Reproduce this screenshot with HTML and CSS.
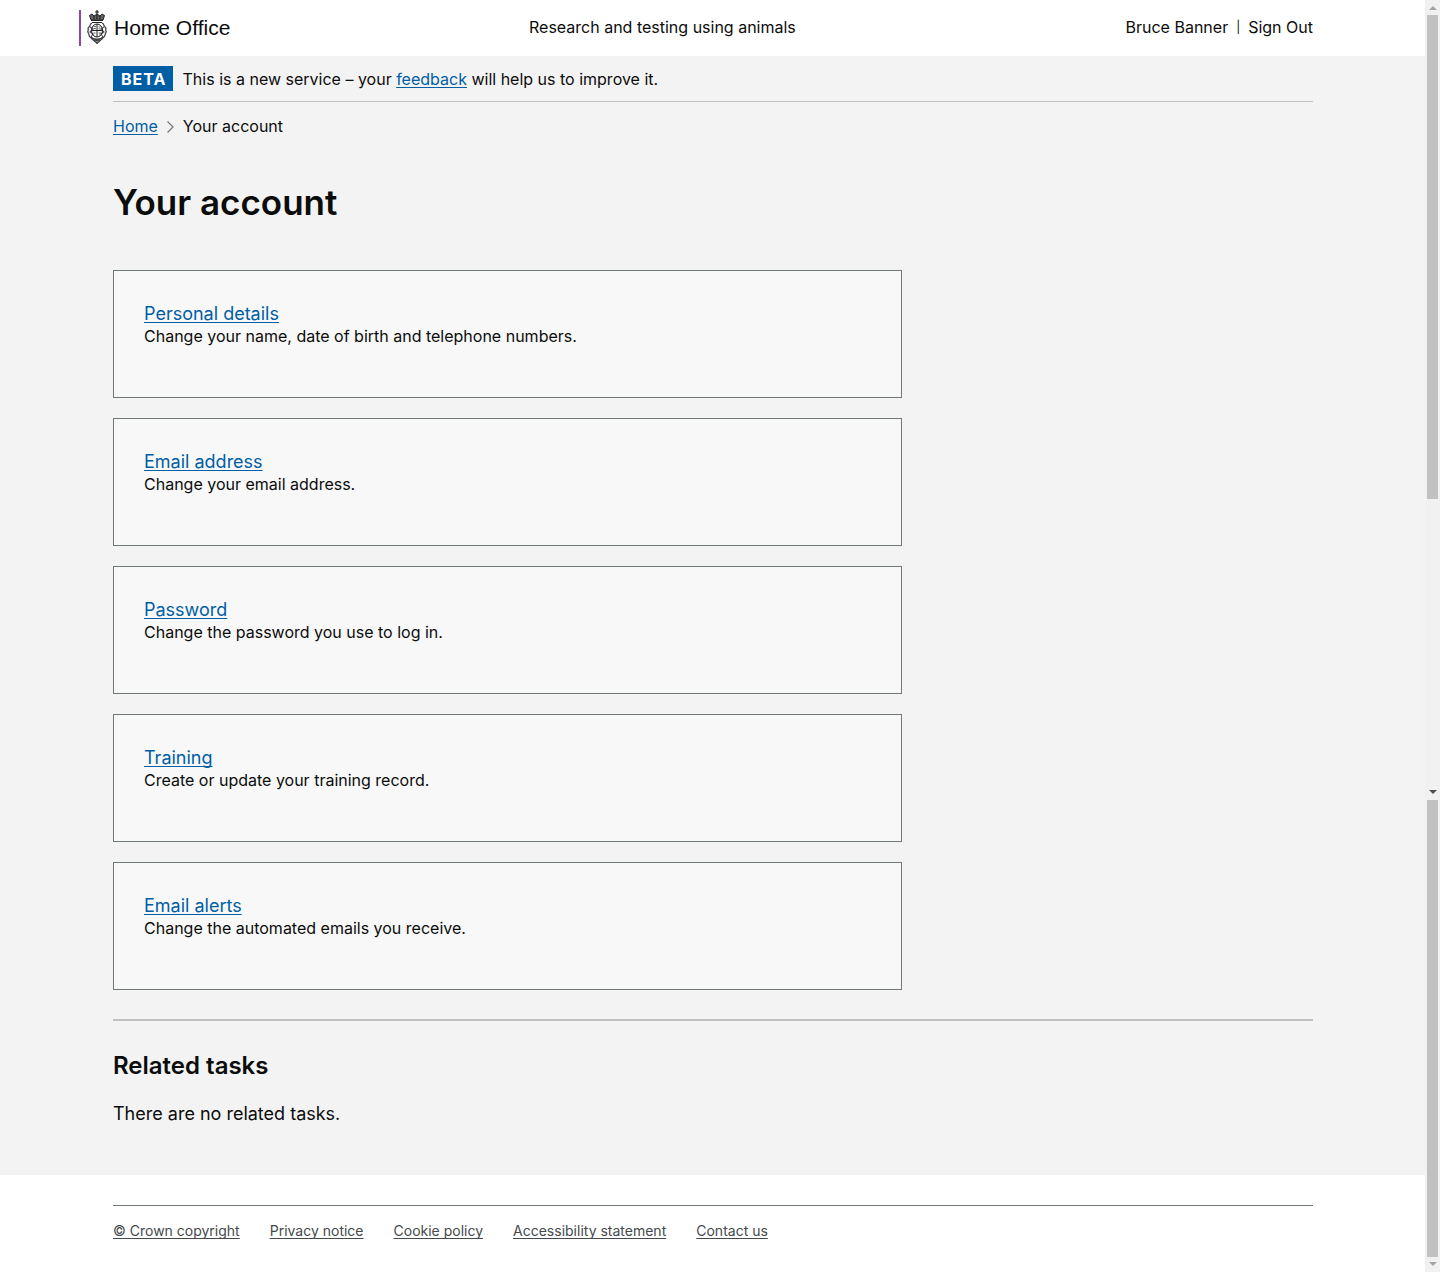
FILE: index.html
```html
<!DOCTYPE html>
<html lang="en">
<head>
<meta charset="utf-8">
<title>Your account - Research and testing using animals</title>
<link rel="stylesheet" href="styles.css">
</head>
<body>
<div class="page">
  <header class="header">
    <div class="header-inner">
      <a class="logo" href="#">
        <svg class="crest" viewBox="0 0 20 36" width="20" height="36" aria-hidden="true" fill="none" stroke="#222">
          <path d="M10 0v5M8 2h4" stroke-width="1.200"/>
          <path d="M4 10 2.500 5.500 5 4l2 2 3-2 3 2 2-2 2.500 1.500L16 10z" fill="#666" stroke-width="1"/>
          <path d="M4 10.500h12M5 12.500h10M7 6v3M10 5v4M13 6v3" stroke-width="1.200"/>
          <path d="M5 13c-3 1-1 3-3 4s0 3-1 4 1 2 1 4 2 2 3 4c2 1 2 3 5 4 3-1 3-3 5-4 1-2 3-2 3-4s2-3 1-4 1-3-1-4 0-3-3-4" stroke="#444" stroke-width="1.300"/>
          <path d="M3 17l3 2-3 3 3 2-2 3M17 17l-3 2 3 3-3 2 2 3" stroke="#555" stroke-width="1.200"/>
          <ellipse cx="10" cy="20.500" rx="5.500" ry="6.500" stroke-width="1"/>
          <path d="M10 14v13M5 20.500h10" stroke-width="1"/>
          <path d="M6.500 16.500h2.500M6.500 18.500h2.500M11.500 17h2M11.500 19h2M6.500 23h2M11.500 23h2.500M12 25h1" stroke="#666" stroke-width="1"/>
          <path d="M4 27c2 3 10 3 12 0M7 30l3 1 3-1M9 33h2" stroke="#444" stroke-width="1.500"/>
        </svg>
        <span>Home Office</span>
      </a>
      <a class="service" href="#">Research and testing using animals</a>
      <nav class="user" aria-label="User"><a href="#">Bruce Banner</a><span class="divider">|</span><a href="#">Sign Out</a></nav>
    </div>
  </header>
  <div class="content">
    <div class="container">
      <div class="phase"><strong class="tag">BETA</strong><span>This is a new service – your <a href="#">feedback</a> will help us to improve it.</span></div>
      <nav aria-label="Breadcrumb"><ol class="breadcrumbs"><li><a href="#">Home</a></li><li><svg class="chevron" viewBox="0 0 7 12" width="7" height="12" aria-hidden="true"><path d="M.5.500 6 6 .5 11.500" fill="none" stroke="#6f777b" stroke-width="1.200"/></svg>Your account</li></ol></nav>
      <main>
        <h1>Your account</h1>
        <ul class="panels">
          <li class="panel"><a href="#">Personal details</a><p>Change your name, date of birth and telephone numbers.</p></li>
          <li class="panel"><a href="#">Email address</a><p>Change your email address.</p></li>
          <li class="panel"><a href="#">Password</a><p>Change the password you use to log in.</p></li>
          <li class="panel"><a href="#">Training</a><p>Create or update your training record.</p></li>
          <li class="panel"><a href="#">Email alerts</a><p>Change the automated emails you receive.</p></li>
        </ul>
        <section class="related"><h2>Related tasks</h2><p>There are no related tasks.</p></section>
      </main>
    </div>
  </div>
  <footer class="footer">
    <ul class="container footer-links">
      <li><a href="#">© Crown copyright</a></li>
      <li><a href="#">Privacy notice</a></li>
      <li><a href="#">Cookie policy</a></li>
      <li><a href="#">Accessibility statement</a></li>
      <li><a href="#">Contact us</a></li>
    </ul>
  </footer>
</div>
<div class="scrollbars" aria-hidden="true">
  <div class="track track-top"><i class="arrow up"></i><i class="thumb"></i><i class="space"></i><i class="arrow down dark"></i></div>
  <div class="track track-bottom"><i class="thumb"></i><i class="arrow down"></i></div>
</div>
</body>
</html>
```

FILE: styles.css
```css
* { box-sizing: border-box; }
body { margin: 0; display: flex; min-height: 100vh; background: #fff; color: #0b0c0c; font: 16px/20px Inter, "Liberation Sans", sans-serif; }
h1, h2, p, ul, ol { margin: 0; padding: 0; }
ul, ol { list-style: none; }
a { color: #005ea5; text-decoration-thickness: 1px; text-underline-offset: 2px; text-decoration-skip-ink: none; }
.page { flex: 1; min-width: 0; }
.header { height: 56px; padding: 10px 112px 10px 79px; }
.header-inner { display: grid; grid-template-columns: 450px 1fr auto; }
.header a { color: inherit; text-decoration: none; }
.header .service, .user { padding-top: 7px; }
.logo { display: flex; align-items: center; gap: 7px; height: 36px; padding-left: 6px; border-left: 2px solid #8a48a8; font: 21px/36px "Liberation Sans", Arial, sans-serif; }
.crest { flex: none; }
.user { display: flex; gap: 8px; }
.divider { font-size: 12px; }
.content { background: #f3f3f3; padding-bottom: 49px; }
.container { margin: 0 112px 0 113px; }
.phase { display: flex; gap: 10px; padding: 10px 0; border-bottom: 1px solid #bfc1c3; line-height: 26px; height: 46px; }
.tag { height: 25px; background: #005ea5; color: #fff; padding: 0 6px 0 8px; letter-spacing: 1px; font-weight: 700; }
.breadcrumbs { display: flex; padding-top: 14px; }
.chevron { margin: 0 9px; vertical-align: -1px; }
h1 { margin: 41px 0 43px; font-size: 35px; line-height: 50px; font-weight: 600; }
.panels { display: grid; gap: 20px; max-width: 789px; }
.panel { border: 1px solid #6f777b; background: #f8f8f8; padding: 30px 30px 51px; }
.panel a { display: inline-block; font-size: 18px; line-height: 25px; }
.panel p { line-height: 20px; }
.related { margin-top: 29px; padding-top: 30px; border-top: 2px solid #bfc1c3; }
h2 { font-size: 24px; line-height: 30px; font-weight: 600; }
.related p { margin-top: 20px; font-size: 18px; line-height: 25px; }
.footer { padding: 30px 0; }
.footer-links { display: flex; flex-wrap: wrap; gap: 0 30px; padding-top: 15px; border-top: 1px solid #6f777b; font-size: 14px; }
.footer a { color: #454a4d; }
.scrollbars { display: flex; flex-direction: column; width: 15px; background: #f1f1f1; }
.track { display: flex; flex-direction: column; align-items: center; }
.track-top { flex: 800; }
.track-bottom { flex: 472; }
.thumb { width: 11px; background: #c1c1c1; flex: 484; }
.space { flex: 286; }
.arrow { display: flex; align-items: center; justify-content: center; height: 15px; width: 15px; }
.arrow::before { content: ""; border: solid transparent; border-width: 0 4px; }
.down { padding-bottom: 2px; }
.up::before { border-bottom: 4px solid #a3a3a3; }
.down::before { border-top: 4px solid #a3a3a3; }
.dark::before { border-top-color: #505050; }
```
